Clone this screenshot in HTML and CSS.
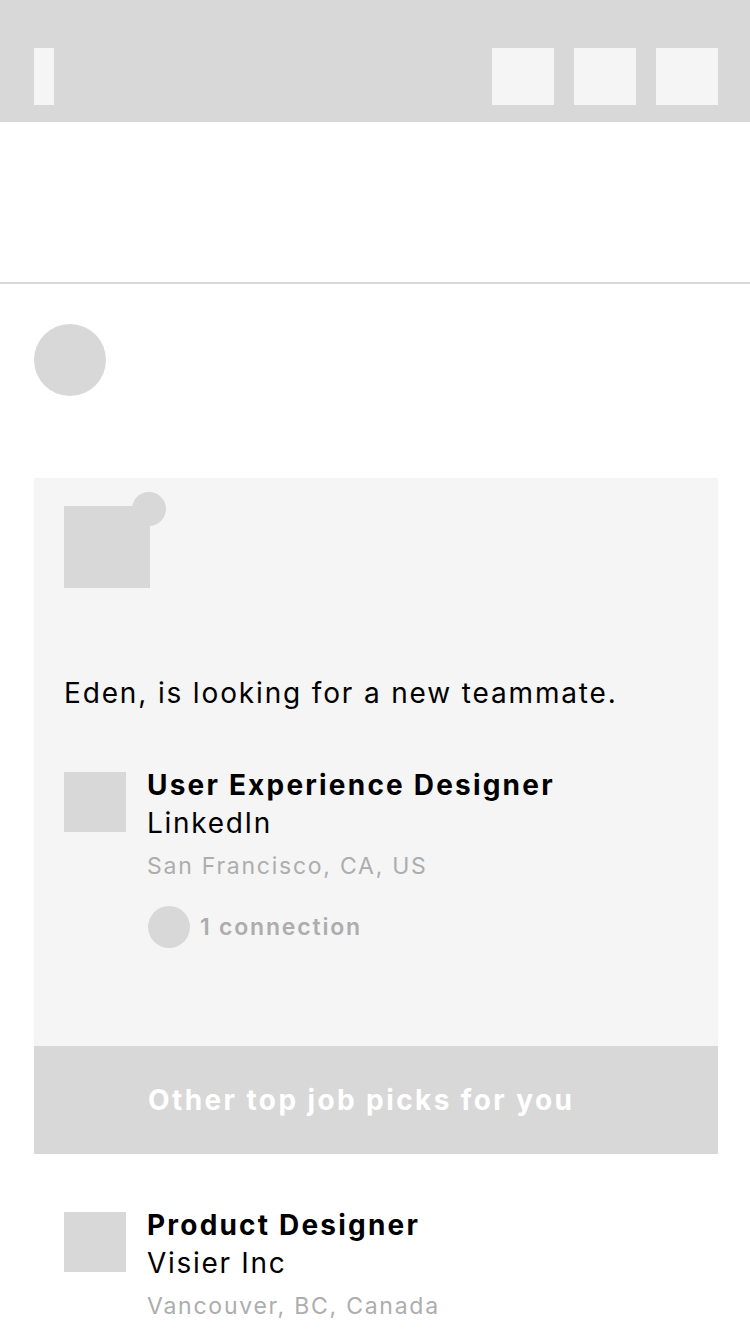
FILE: index.html
```html
<!DOCTYPE html>
<html lang="en">
<head>
<meta charset="utf-8">
<title>Job picks</title>
<link rel="stylesheet" href="styles.css">
</head>
<body>
<div class="app">
  <header class="topbar">
    <div class="topbar-left"></div>
    <div class="topbar-actions">
      <div class="action"></div>
      <div class="action"></div>
      <div class="action"></div>
    </div>
  </header>
  <div class="blank"></div>
  <section class="profile">
    <div class="avatar"></div>
  </section>
  <section class="card">
    <div class="card-logo">
      <div class="card-logo-badge"></div>
    </div>
    <p class="headline">Eden, is looking for a new teammate.</p>
    <div class="job">
      <div class="job-logo"></div>
      <div class="job-info">
        <div class="job-title">User Experience Designer</div>
        <div class="job-company">LinkedIn</div>
        <div class="job-location">San Francisco, CA, US</div>
        <div class="job-conn">
          <div class="conn-avatar"></div>
          <span class="conn-text">1 connection</span>
        </div>
      </div>
    </div>
  </section>
  <div class="picks-bar">Other top job picks for you</div>
  <section class="list">
    <div class="job">
      <div class="job-logo"></div>
      <div class="job-info">
        <div class="job-title">Product Designer</div>
        <div class="job-company">Visier Inc</div>
        <div class="job-location">Vancouver, BC, Canada</div>
      </div>
    </div>
  </section>
</div>
</body>
</html>
```
FILE: styles.css
```css
* { box-sizing: border-box; }
html, body {
  margin: 0;
  padding: 0;
  background: #ffffff;
}
body {
  font-family: Inter, "Noto Sans", "Liberation Sans", sans-serif;
  color: #000;
  width: 750px;
  overflow: hidden;
}
.app {
  width: 750px;
  height: 1334px;
  overflow: hidden;
}
.topbar {
  height: 122px;
  background: #d8d8d8;
  display: flex;
  justify-content: space-between;
  align-items: flex-start;
  padding: 48px 32px 0 34px;
}
.topbar-left {
  width: 20px;
  height: 57px;
  background: #f5f5f5;
}
.topbar-actions {
  display: flex;
  gap: 20px;
}
.action {
  width: 62px;
  height: 57px;
  background: #f5f5f5;
}
.blank {
  height: 162px;
  border-bottom: 2px solid #d8d8d8;
}
.profile {
  padding: 40px 34px 0;
}
.avatar {
  width: 72px;
  height: 72px;
  border-radius: 50%;
  background: #d8d8d8;
}
.card {
  margin: 82px 32px 0 34px;
  background: #f5f5f5;
  padding: 28px 30px 98px;
}
.card-logo {
  position: relative;
  width: 86px;
  height: 82px;
  background: #d8d8d8;
}
.card-logo-badge {
  position: absolute;
  left: 68px;
  top: -14px;
  width: 34px;
  height: 34px;
  border-radius: 50%;
  background: #d8d8d8;
}
.headline {
  margin: 88px 0 0;
  font-size: 28px;
  line-height: 34px;
  letter-spacing: 1.85px;
  color: #000;
}
.job {
  display: flex;
  align-items: flex-start;
  gap: 21px;
}
.card .job {
  margin-top: 56px;
}
.job-logo {
  flex: none;
  width: 62px;
  height: 60px;
  margin-top: 6px;
  background: #d8d8d8;
}
.job-title {
  font-size: 28px;
  line-height: 38px;
  font-weight: 700;
  letter-spacing: 2.2px;
}
.job-company {
  font-size: 28px;
  line-height: 38px;
  letter-spacing: 1.7px;
}
.job-location {
  margin-top: 9px;
  font-size: 23px;
  line-height: 30px;
  letter-spacing: 1.75px;
  color: #adadad;
}
.job-conn {
  margin-top: 25px;
  display: flex;
  align-items: center;
  gap: 10px;
}
.conn-avatar {
  width: 42px;
  height: 42px;
  margin-left: 1px;
  border-radius: 50%;
  background: #d8d8d8;
}
.conn-text {
  font-size: 23px;
  line-height: 30px;
  font-weight: 600;
  letter-spacing: 1.8px;
  color: #adadad;
}
.picks-bar {
  margin: 0 32px 0 34px;
  height: 108px;
  background: #d8d8d8;
  display: flex;
  align-items: center;
  padding-left: 114px;
  color: #ffffff;
  font-size: 28px;
  font-weight: 700;
  letter-spacing: 2.4px;
}
.list {
  padding: 52px 34px 0 64px;
}
```
